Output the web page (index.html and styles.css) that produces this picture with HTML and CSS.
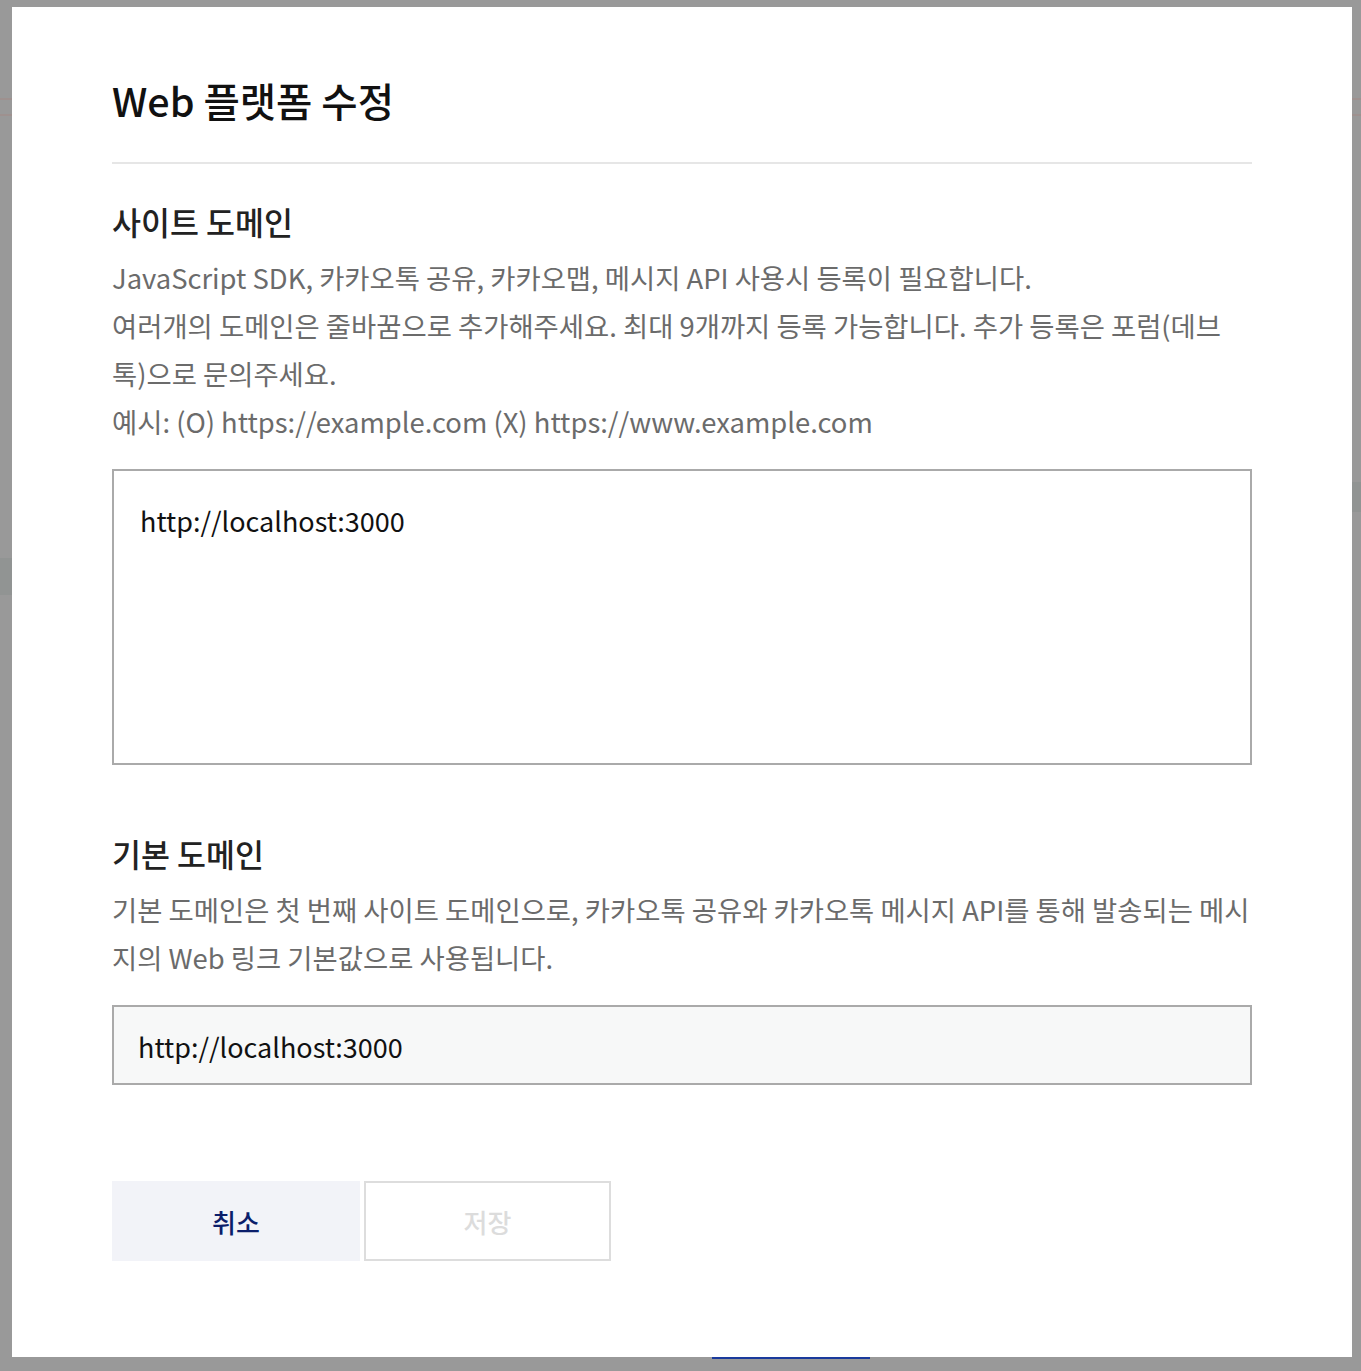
FILE: index.html
```html
<!DOCTYPE html>
<html>
<head>
<meta charset="utf-8">
<title>Web 플랫폼 수정</title>
<link rel="stylesheet" href="styles.css">
</head>
<body>
<div class="backdrop">
  <div class="bg-line bg-line-l1"></div>
  <div class="bg-line bg-line-l2"></div>
  <div class="bg-line bg-line-r1"></div>
  <div class="bg-line bg-line-r2"></div>
  <div class="bg-block bg-block-l1"></div>
  <div class="bg-block bg-block-r1"></div>
  <div class="bg-tab"></div>
  <div class="modal">
    <h1 class="modal-title">Web 플랫폼 수정</h1>
    <section class="field">
      <h2 class="field-title">사이트 도메인</h2>
      <p class="field-desc">JavaScript SDK, 카카오톡 공유, 카카오맵, 메시지 API 사용시 등록이 필요합니다.<br>여러개의 도메인은 줄바꿈으로 추가해주세요. 최대 9개까지 등록 가능합니다. 추가 등록은 포럼(데브톡)으로 문의주세요.<br>예시: (O) https://example.com (X) https://www.example.com</p>
      <textarea class="textarea">http://localhost:3000</textarea>
    </section>
    <section class="field field-second">
      <h2 class="field-title">기본 도메인</h2>
      <p class="field-desc">기본 도메인은 첫 번째 사이트 도메인으로, 카카오톡 공유와 카카오톡 메시지 API를 통해 발송되는 메시지의 Web 링크 기본값으로 사용됩니다.</p>
      <div class="readonly">http://localhost:3000</div>
    </section>
    <div class="actions">
      <button class="btn btn-cancel" type="button">취소</button>
      <button class="btn btn-save" type="button" disabled>저장</button>
    </div>
  </div>
</div>
</body>
</html>
```
FILE: styles.css
```css
* { box-sizing: border-box; }
html, body { margin: 0; padding: 0; }
body {
  background: #999999;
  font-family: "Noto Sans CJK KR", "Noto Sans", sans-serif;
  width: 1361px;
  height: 1371px;
  overflow: hidden;
}
.backdrop {
  position: relative;
  width: 1361px;
  height: 1371px;
  padding: 7px 9px 0 12px;
}
.bg-line { position: absolute; height: 2px; background: #9e918f; }
.bg-line-l1 { left: 0; width: 12px; top: 98px; }
.bg-line-l2 { left: 0; width: 12px; top: 114px; }
.bg-line-r1 { right: 0; width: 9px; top: 98px; }
.bg-line-r2 { right: 0; width: 9px; top: 114px; }
.bg-block { position: absolute; background: #919493; }
.bg-block-l1 { left: 0; width: 12px; top: 558px; height: 37px; }
.bg-block-r1 { right: 0; width: 9px; top: 482px; height: 30px; }
.bg-tab { position: absolute; left: 712px; top: 1357px; width: 158px; height: 2px; background: #1a3a9c; }

.modal {
  position: relative;
  width: 1340px;
  height: 1350px;
  background: #ffffff;
  padding: 64px 100px 0 100px;
}
.modal-title {
  margin: 0;
  font-size: 39.5px;
  line-height: 58px;
  font-weight: 500;
  color: #111111;
  padding-bottom: 33px;
  border-bottom: 2px solid #e6e6e6;
}
.field { margin-top: 34px; }
.field-second { margin-top: 65px; }
.field-title {
  margin: 0 0 9px;
  font-size: 31.5px;
  line-height: 46px;
  font-weight: 500;
  color: #222222;
}
.field-desc {
  margin: 0;
  font-size: 27.4px;
  line-height: 48px;
  color: #6b6b6b;
  font-weight: 400;
}
.textarea {
  display: block;
  margin-top: 24px;
  width: 1140px;
  height: 296px;
  border: 2px solid #aaaaaa;
  border-radius: 0;
  padding: 31px 26px;
  font-family: inherit;
  font-size: 27px;
  line-height: 38px;
  color: #111111;
  resize: none;
  outline: none;
  background: #ffffff;
}
.readonly {
  margin-top: 24px;
  height: 80px;
  border: 2px solid #aaaaaa;
  background: #f7f8f8;
  padding: 0 24px;
  display: flex;
  align-items: center;
  font-size: 27px;
  color: #111111;
  padding-top: 2px;
}
.actions {
  margin-top: 96px;
  display: flex;
  gap: 4px;
}
.btn {
  width: 248px;
  height: 80px;
  font-family: inherit;
  font-size: 26px;
  font-weight: 500;
  border-radius: 0;
  padding: 0;
}
.btn-cancel {
  background: #f2f3f8;
  border: 2px solid #f2f3f8;
  color: #0b1e6b;
}
.btn-save {
  width: 247px;
  background: #ffffff;
  border: 2px solid #dddddd;
  color: #dcdcdc;
}
```
